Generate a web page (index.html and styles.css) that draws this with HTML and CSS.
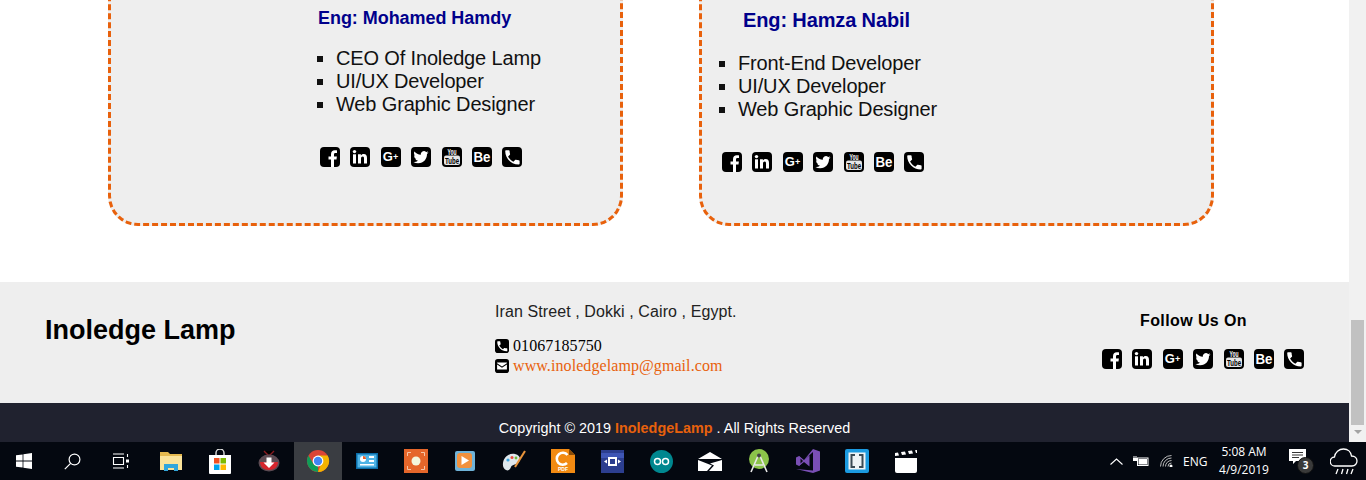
FILE: index.html
```html
<!DOCTYPE html>
<html lang="en">
<head>
<meta charset="utf-8">
<title>Inoledge Lamp</title>
<link rel="stylesheet" href="styles.css">
</head>
<body>
<svg class="sprite" xmlns="http://www.w3.org/2000/svg">
  <symbol id="i-fb" viewBox="0 0 20 20"><rect width="20" height="20" rx="4"/><path fill="#fff" d="M14 20v-7.600h2.500l.4-3H14V7.600c0-.9.3-1.500 1.500-1.500H17V3.400c-.3 0-1.200-.1-2.200-.1-2.300 0-3.800 1.400-3.800 3.900v2.200H8.500v3H11V20z"/></symbol>
  <symbol id="i-in" viewBox="0 0 20 20"><rect width="20" height="20" rx="4"/><g fill="#fff"><rect x="3" y="7.300" width="3" height="9.200"/><circle cx="4.500" cy="4.600" r="1.700"/><path d="M8 7.300h2.900v1.300c.5-.8 1.400-1.500 2.800-1.500 2.700 0 3.300 1.700 3.300 4v5.400h-3v-4.800c0-1.100-.1-2.100-1.200-2.100-1.200 0-1.800.9-1.800 2.100v4.800H8z"/></g></symbol>
  <symbol id="i-gp" viewBox="0 0 20 20"><rect width="20" height="20" rx="4"/><text class="glyph-g" x="1.800" y="14.300">G</text><text class="glyph-plus" x="12" y="12.800">+</text></symbol>
  <symbol id="i-tw" viewBox="0 0 20 20"><rect width="20" height="20" rx="4"/><path fill="#fff" transform="translate(2.400 2.600) scale(.63)" d="M23.953 4.570a10 10 0 01-2.825.775 4.958 4.958 0 002.163-2.723c-.951.555-2.005.959-3.127 1.184a4.920 4.920 0 00-8.384 4.482C7.690 8.095 4.067 6.130 1.640 3.162a4.822 4.822 0 00-.666 2.475c0 1.710.870 3.213 2.188 4.096a4.904 4.904 0 01-2.228-.616v.060a4.923 4.923 0 003.946 4.827 4.996 4.996 0 01-2.212.085 4.936 4.936 0 004.604 3.417 9.867 9.867 0 01-6.102 2.105c-.390 0-.779-.023-1.170-.067a13.995 13.995 0 007.557 2.209c9.053 0 13.998-7.496 13.998-13.985 0-.210 0-.420-.015-.630A9.935 9.935 0 0024 4.590z"/></symbol>
  <symbol id="i-yt" viewBox="0 0 20 20"><rect width="20" height="20" rx="4"/><rect x="2" y="8.500" width="16" height="9.500" rx="2" fill="#e6e6e6"/><text class="glyph-you" x="5.500" y="8" textLength="9" lengthAdjust="spacingAndGlyphs">You</text><text class="glyph-tube" x="3" y="16.600" textLength="14" lengthAdjust="spacingAndGlyphs">Tube</text></symbol>
  <symbol id="i-be" viewBox="0 0 20 20"><rect width="20" height="20" rx="4"/><text class="glyph-be" x="1.500" y="14.800" textLength="17" lengthAdjust="spacingAndGlyphs">Be</text></symbol>
  <symbol id="i-ph" viewBox="0 0 20 20"><rect width="20" height="20" rx="4"/><path fill="#fff" transform="translate(.8 .8) scale(.8)" d="M6.600 10.800c1.400 2.800 3.800 5.100 6.600 6.600l2.200-2.200c.3-.3.7-.4 1-.2 1.100.4 2.300.6 3.600.6.6 0 1 .4 1 1V20c0 .6-.4 1-1 1C10.600 21 3 13.400 3 4c0-.6.4-1 1-1h3.500c.6 0 1 .4 1 1 0 1.300.2 2.500.6 3.600.1.300 0 .7-.2 1z"/></symbol>
  <symbol id="i-ml" viewBox="0 0 20 20"><rect width="20" height="20" rx="4"/><path fill="#fff" d="M3 5h14v1.200l-7 4.600-7-4.600zM3 8l7 4.600L17 8v7H3z"/></symbol>
</svg>

<div class="screen">
  <div class="window">
    <main class="page">
      <section class="team">
        <article class="card card-left">
          <h3 class="name name-left">Eng: Mohamed Hamdy</h3>
          <ul class="roles">
            <li>CEO Of Inoledge Lamp</li>
            <li>UI/UX Developer</li>
            <li>Web Graphic Designer</li>
          </ul>
          <div class="socials">
            <svg class="soc"><use href="#i-fb"/></svg>
            <svg class="soc"><use href="#i-in"/></svg>
            <svg class="soc"><use href="#i-gp"/></svg>
            <svg class="soc"><use href="#i-tw"/></svg>
            <svg class="soc"><use href="#i-yt"/></svg>
            <svg class="soc"><use href="#i-be"/></svg>
            <svg class="soc"><use href="#i-ph"/></svg>
          </div>
        </article>
        <article class="card card-right">
          <h3 class="name name-right">Eng: Hamza Nabil</h3>
          <ul class="roles">
            <li>Front-End Developer</li>
            <li>UI/UX Developer</li>
            <li>Web Graphic Designer</li>
          </ul>
          <div class="socials">
            <svg class="soc"><use href="#i-fb"/></svg>
            <svg class="soc"><use href="#i-in"/></svg>
            <svg class="soc"><use href="#i-gp"/></svg>
            <svg class="soc"><use href="#i-tw"/></svg>
            <svg class="soc"><use href="#i-yt"/></svg>
            <svg class="soc"><use href="#i-be"/></svg>
            <svg class="soc"><use href="#i-ph"/></svg>
          </div>
        </article>
      </section>

      <footer class="footer">
        <h2 class="brand">Inoledge Lamp</h2>
        <div class="contact">
          <p class="address">Iran Street , Dokki , Cairo , Egypt.</p>
          <p class="contact-line"><svg class="mini"><use href="#i-ph"/></svg>01067185750</p>
          <p class="contact-line"><svg class="mini"><use href="#i-ml"/></svg><a class="mail">www.inoledgelamp@gmail.com</a></p>
        </div>
        <div class="follow">
          <h4 class="follow-title">Follow Us On</h4>
          <div class="socials">
            <svg class="soc"><use href="#i-fb"/></svg>
            <svg class="soc"><use href="#i-in"/></svg>
            <svg class="soc"><use href="#i-gp"/></svg>
            <svg class="soc"><use href="#i-tw"/></svg>
            <svg class="soc"><use href="#i-yt"/></svg>
            <svg class="soc"><use href="#i-be"/></svg>
            <svg class="soc"><use href="#i-ph"/></svg>
          </div>
        </div>
      </footer>

      <div class="copyright">Copyright © 2019 <strong class="accent">InoledgeLamp</strong> . All Rights Reserved</div>
    </main>
    <div class="scrollbar">
      <div class="thumb"></div>
      <div class="arrow"></div>
    </div>
  </div>

  <nav class="taskbar">
    <div class="task-left">
      <div class="sys"><svg width="16" height="16" viewBox="0 0 16 16"><path fill="#fff" d="M0 2.300l6.600-.9v6.200H0zM7.400 1.300L16 0v7.600H7.400zM0 8.400h6.600v6.200L0 13.700zM7.400 8.400H16V16l-8.600-1.300z"/></svg></div>
      <div class="sys"><svg width="17" height="17" viewBox="0 0 17 17" fill="none" stroke="#fff" stroke-width="1.200"><circle cx="10.500" cy="6.500" r="5.400"/><path d="M6.600 10.400L.8 16.200"/></svg></div>
      <div class="sys"><svg width="17" height="16" viewBox="0 0 17 16" fill="none" stroke="#fff" stroke-width="1.100"><path d="M1 1h11M1 15h11M1.500 4.500h10v7h-10z"/><path d="M15.500 1v3M15.500 12v3"/><rect x="14" y="6.500" width="3" height="3" fill="#fff" stroke="none"/></svg></div>
    </div>
    <div class="task-apps">
      <div class="app"><svg width="22" height="20" viewBox="0 0 22 20"><path fill="#e5b94f" d="M0 1h8l2 2h12v16H0z"/><path fill="#fbe39a" d="M0 5h22v14H0z"/><path fill="#31a6dc" d="M4 20v-7h14v7h-4v-3H8v3z"/></svg></div>
      <div class="app"><svg width="24" height="25" viewBox="0 0 24 25"><path fill="none" stroke="#ddd" stroke-width="1.400" d="M8 7V4a4 4 0 018 0v3"/><path fill="#fff" d="M1 6h22v18a1 1 0 01-1 1H2a1 1 0 01-1-1z"/><path fill="#f25022" d="M6 9h5.500v5.500H6z"/><path fill="#7fba00" d="M12.500 9H18v5.500h-5.500z"/><path fill="#00a4ef" d="M6 15.500h5.500V21H6z"/><path fill="#ffb900" d="M12.500 15.500H18V21h-5.500z"/></svg></div>
      <div class="app"><svg width="22" height="22" viewBox="0 0 22 22"><path stroke="#8a1a20" stroke-width="1.400" d="M6 1l5 5 5-5"/><ellipse cx="11" cy="13" rx="10.500" ry="8.500" fill="#5c4a52"/><path fill="#d6242c" d="M2 12h18c0 5-4 8-9 8s-9-3-9-8z"/><path fill="#fff" d="M8.500 7.500h5v5h3L11 18l-5.500-5.500h3z"/></svg></div>
      <div class="app app-active"><svg width="24" height="24" viewBox="0 0 24 24"><circle cx="12" cy="12" r="11" fill="#db4437"/><path fill="#0f9d58" d="M12 23A11 11 0 012.400 6.600l5.500 9.100 4 .7z"/><path fill="#f4b400" d="M12 23a11 11 0 009.600-16.500H12l4 6z"/><circle cx="12" cy="12" r="5.400" fill="#fff"/><circle cx="12" cy="12" r="4.200" fill="#4285f4"/></svg></div>
      <div class="app"><svg width="22" height="16" viewBox="0 0 22 16"><rect width="22" height="16" fill="#0a6da8"/><rect x="1.500" y="1.500" width="19" height="13" fill="#4fb4e6"/><circle cx="7" cy="6" r="3" fill="#fff"/><path fill="#e8612c" d="M7 3a3 3 0 013 3H7z"/><path fill="#fff" d="M13 3h5v2h-5zM13 7h5v2h-5zM4 11h14v1.500H4z"/></svg></div>
      <div class="app"><svg width="24" height="24" viewBox="0 0 24 24"><rect width="24" height="24" fill="#e5662a"/><circle cx="12" cy="12" r="4.500" fill="#f3f6dc"/><path fill="none" stroke="#f6c5a6" stroke-width="1" d="M3.500 7V3.500H7M17 3.500h3.500V7M3.500 17v3.500H7M17 20.500h3.500V17"/></svg></div>
      <div class="app"><svg width="20" height="20" viewBox="0 0 20 20"><rect width="20" height="20" rx="2" fill="#6fb3d8"/><rect x="2" y="2" width="15" height="15" rx="3" fill="#f2913d"/><path fill="#fff" d="M6.500 5l7.500 4.500-7.500 4.500z"/></svg></div>
      <div class="app"><svg width="24" height="22" viewBox="0 0 24 22"><path fill="#dfe7ec" d="M1 13C2 6 8 3 13 4c5 1 6 5 4 8s-7 2-8 5-3 4-5 3-3.500-3-3-7z"/><circle cx="6" cy="10" r="1.600" fill="#3ba4e0"/><circle cx="10" cy="7.500" r="1.500" fill="#e84a3c"/><circle cx="14" cy="8" r="1.400" fill="#6dbb3a"/><path stroke="#e8933a" stroke-width="2" d="M23 1L13 17"/></svg></div>
      <div class="app"><svg width="24" height="24" viewBox="0 0 24 24"><path fill="#f28a12" d="M0 0h18l6 6v18H0z"/><path fill="#8a4c08" d="M18 0l6 6h-6z"/><path fill="none" stroke="#fff" stroke-width="2.600" d="M16.500 6a6 6 0 10-.5 8"/><text class="pdf-label" x="12" y="22" text-anchor="middle">PDF</text></svg></div>
      <div class="app"><svg width="23" height="23" viewBox="0 0 23 23"><rect width="23" height="23" fill="#2c3e8f"/><rect y="3" width="23" height="5" fill="#3f56b5"/><rect x="8" y="8" width="7" height="7" fill="none" stroke="#fff" stroke-width="2"/><path fill="#fff" d="M3 11.500l3-2v4zM20 11.500l-3-2v4z"/></svg></div>
      <div class="app"><svg width="23" height="23" viewBox="0 0 23 23"><circle cx="11.500" cy="11.500" r="11.500" fill="#00878f"/><g fill="none" stroke="#fff" stroke-width="1.500"><circle cx="7.500" cy="11.500" r="3"/><circle cx="15.500" cy="11.500" r="3"/></g></svg></div>
      <div class="app"><svg width="24" height="19" viewBox="0 0 24 19"><path fill="#fff" d="M12 0l12 7H0zM0 8l14 5.500L9 19H0zM24 8v11H11l5-5.500-4-2z"/></svg></div>
      <div class="app"><svg width="22" height="24" viewBox="0 0 22 24"><circle cx="11" cy="10" r="10" fill="#8bc34a"/><path fill="none" stroke="#e8e8e8" stroke-width="1.600" d="M3 23L10 7M19 23L12 7M7 16h8"/><circle cx="11" cy="6.500" r="2" fill="#444"/></svg></div>
      <div class="app"><svg width="24" height="24" viewBox="0 0 24 24"><path fill="#7a4fb5" d="M17 0l7 2.500v19L17 24 0 20l17 1.500V3L8 11 3 7 0 8.500v7L3 17l5-4 5.500 4.500V6.500L8 11"/><path fill="#7a4fb5" d="M3 7v10l5-5z"/><path fill="#0a0a14" d="M4.500 9.500v5L7 12z"/></svg></div>
      <div class="app"><svg width="24" height="24" viewBox="0 0 24 24"><rect width="24" height="24" rx="2" fill="#1b9ae0"/><rect x="3.500" y="3.500" width="17" height="17" fill="#eef3f6"/><path fill="none" stroke="#3a4a55" stroke-width="2" d="M10 6H6.500v12H10M14 6h3.500v12H14"/></svg></div>
      <div class="app"><svg width="22" height="23" viewBox="0 0 22 23"><path fill="#fff" d="M0 8h22v13a2 2 0 01-2 2H2a2 2 0 01-2-2z"/><path fill="#fff" d="M0 3l3-.5 1 3-4 .5zM6 2l4-.5 1 3-4 .5zM13 1l4-.5 1 3-4 .5zM20 .3L22 0v3l-1 .1z"/></svg></div>
    </div>
    <div class="tray">
      <svg class="tray-caret" width="13" height="7" viewBox="0 0 13 7" fill="none" stroke="#fff" stroke-width="1.100"><path d="M.5 6.500l6-5.500 6 5.500"/></svg>
      <svg class="tray-batt" width="16" height="10" viewBox="0 0 16 10"><path fill="#fff" d="M0 2h4v3H0z"/><path stroke="#fff" d="M1 0v2M3 0v2"/><rect x="4.500" y="2" width="10.500" height="7.500" fill="none" stroke="#fff"/><rect x="5.500" y="3" width="8.500" height="5.500" fill="#fff"/></svg>
      <svg class="tray-wifi" width="13" height="12" viewBox="0 0 13 12" fill="none" stroke="#bbb"><path d="M.5 11.500A11 11 0 0111.500.5M3 11.500A8.500 8.500 0 0111.500 3M5.500 11.500A6 6 0 0111.500 5.500M8 11.500A3.500 3.500 0 0111.500 8"/><circle cx="11" cy="11" r="1.500" fill="#fff" stroke="none"/></svg>
      <span class="tray-lang">ENG</span>
      <div class="clock"><span>5:08 AM</span><span>4/9/2019</span></div>
      <div class="notify">
        <svg class="notify-icon" width="17" height="15" viewBox="0 0 17 15"><path fill="#fff" d="M0 0h17v12H7l-3 3v-3H0z"/><path stroke="#333" d="M3 3.500h11M3 6h11M3 8.500h7"/></svg>
        <span class="badge">3</span>
      </div>
      <svg class="tray-weather" width="28" height="27" viewBox="0 0 28 27" fill="none" stroke="#fff" stroke-width="1.300"><path d="M5 18a4.500 4.500 0 01-.5-9C5 4.500 9 1 13.500 1c4.500 0 7.500 3 8 7 3.500 0 5.500 2.500 5.500 5s-2 5-5 5z"/><path d="M8 21l-2 5M13 21l-1.500 5M18 21l-1.500 5M23 21l-2 5"/></svg>
    </div>
  </nav>
</div>
</body>
</html>
```

FILE: styles.css
```css
* { box-sizing: border-box; }

html, body {
  margin: 0;
  padding: 0;
  height: 480px;
  overflow: hidden;
  font-family: "Liberation Sans", Arial, sans-serif;
  color: #000;
  background: #fff;
}

.sprite { display: none; }

.screen {
  display: flex;
  flex-direction: column;
  width: 1366px;
  height: 480px;
}

.window {
  display: flex;
  height: 442px;
  flex: none;
}

.page {
  width: 1349px;
  flex: none;
  overflow: hidden;
  display: flex;
  flex-direction: column;
}

/* team cards: the tops are scrolled out of view */
.team {
  height: 282px;
  flex: none;
  display: flex;
  gap: 76px;
  padding-left: 108px;
}

.card {
  width: 515px;
  height: 300px;
  margin-top: -74px;
  background: #eee;
  border: 3px dashed #e8610c;
  border-radius: 30px;
}

.card-left { padding: 79px 0 0 207px; }
.card-right { padding: 80px 0 0 21px; }

.name {
  margin: 0;
  font-weight: 700;
  color: #00008b;
}

.name-left { font-size: 18px; line-height: 21px; letter-spacing: -.05px; }
.name-right { font-size: 20px; line-height: 23px; margin-left: 20px; letter-spacing: -.13px; }

.roles {
  list-style: square;
  margin: 18px 0 31px;
  font-size: 20px;
  line-height: 23px;
  letter-spacing: -.15px;
  color: #111;
}

.card-left .roles { padding-left: 18px; }
.card-right .roles { margin-top: 20px; padding-left: 15px; }

.socials {
  display: flex;
  gap: 10.400px;
}

.card-left .socials { margin-left: 2px; }
.card-right .socials { margin-left: -1px; }

.soc {
  width: 20px;
  height: 20px;
  flex: none;
}

.glyph-g { font: 700 13px "Liberation Sans", Arial, sans-serif; fill: #fff; }
.glyph-plus { font: 700 9px "Liberation Sans", Arial, sans-serif; fill: #fff; }
.glyph-you { font: 700 8.500px "Liberation Sans", Arial, sans-serif; fill: #fff; }
.glyph-tube { font: 700 8.500px "Liberation Sans", Arial, sans-serif; fill: #000; }
.glyph-be { font: 700 14px "Liberation Sans", Arial, sans-serif; fill: #fff; }
.pdf-label { font: 700 5px "Liberation Sans", Arial, sans-serif; fill: #fff; }

/* footer */
.footer {
  height: 121px;
  flex: none;
  background: #eee;
  display: grid;
  grid-template-columns: 450px 607px 1fr;
  padding-left: 45px;
}

.brand {
  margin: 33px 0 0;
  font-size: 27px;
  line-height: 30px;
  font-weight: 700;
}

.contact { padding-top: 21px; }

.address {
  margin: 0 0 15px;
  font-size: 16px;
  line-height: 18px;
  letter-spacing: .09px;
  color: #222;
}

.contact-line {
  margin: 0;
  display: flex;
  align-items: center;
  gap: 4px;
  font-family: "Liberation Serif", "Times New Roman", serif;
  font-size: 16px;
  line-height: 20px;
  letter-spacing: .08px;
}

.mini {
  width: 14px;
  height: 14px;
  flex: none;
}

.mail { color: #e8610c; }

.follow { padding-top: 30px; }

.follow-title {
  margin: 0 0 19px 38px;
  font-size: 16px;
  line-height: 18px;
  letter-spacing: .4px;
  font-weight: 700;
}

.copyright {
  height: 39px;
  flex: none;
  background: #20222f;
  color: #fff;
  font-size: 14.400px;
  line-height: 17px;
  text-align: center;
  padding-top: 17px;
}

.accent { color: #e8610c; }

/* scrollbar */
.scrollbar {
  width: 17px;
  flex: none;
  background: #f1f1f1;
  padding: 320px 2px 0;
  display: flex;
  flex-direction: column;
  align-items: center;
}

.thumb {
  width: 13px;
  height: 105px;
  background: #c1c1c1;
  flex: none;
}

.arrow {
  margin-top: 5px;
  width: 0;
  height: 0;
  border-left: 4px solid transparent;
  border-right: 4px solid transparent;
  border-top: 4px solid #a3a3a3;
}

/* taskbar */
.taskbar {
  height: 38px;
  flex: none;
  background: #040810;
  display: flex;
  align-items: stretch;
  color: #fff;
  font-family: "Open Sans", "Noto Sans", sans-serif;
}

.task-left {
  display: flex;
  width: 147px;
  flex: none;
}

.sys {
  width: 48px;
  display: flex;
  align-items: center;
  justify-content: center;
}

.task-apps {
  display: flex;
  gap: 1px;
  flex: none;
}

.app {
  width: 48px;
  display: flex;
  align-items: center;
  justify-content: center;
}

.app-active { background: #3a3d42; }

.tray {
  flex: 1;
  display: flex;
  align-items: center;
  padding-left: 180px;
}

.tray-caret { margin-right: 10px; flex: none; }
.tray-batt { margin-right: 11px; flex: none; }
.tray-wifi { margin-right: 10px; flex: none; }

.tray-lang {
  font-size: 12px;
  width: 24px;
  margin-right: 8px;
}

.clock {
  width: 58px;
  display: flex;
  flex-direction: column;
  align-items: center;
  font-size: 12px;
  line-height: 18px;
}

.notify {
  position: relative;
  margin-left: 16px;
  width: 24px;
  height: 26px;
  padding-top: 1px;
  flex: none;
}

.notify-icon { display: block; }

.badge {
  position: absolute;
  left: 8px;
  top: 9px;
  width: 17px;
  height: 17px;
  border-radius: 50%;
  background: #3a3a3a;
  border: 1px solid #111;
  font-size: 10px;
  line-height: 15px;
  text-align: center;
  font-weight: 700;
}

.tray-weather { margin-left: 17px; flex: none; }
```
